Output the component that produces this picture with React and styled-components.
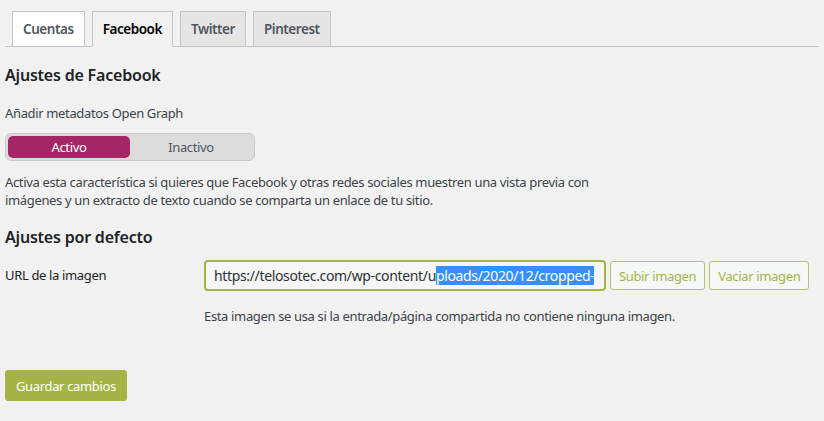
import React from "react";
import styled, { createGlobalStyle } from "styled-components";

const Global = createGlobalStyle`
  html, body { margin: 0; padding: 0; background: #f1f1f1; }
  body { font-family: "Noto Sans", "Open Sans", sans-serif; font-size: 13px; letter-spacing: -0.35px; color: #3c434a; }
  * { box-sizing: border-box; }
`;

const Page = styled.div`
  padding: 0 5px;
  width: 824px;
  height: 421px;
  overflow: hidden;
`;

const TabNav = styled.nav`
  display: flex;
  gap: 7px;
  margin-top: 11px;
  padding-left: 7px;
  border-bottom: 1px solid #c3c4c7;
`;

const Tab = styled.a`
  display: block;
  height: 36px;
  margin-bottom: -1px;
  padding: 0 10px;
  font-size: 13.5px;
  font-weight: 600;
  letter-spacing: -0.45px;
  line-height: 34px;
  border: 1px solid #c3c4c7;
  background: ${(p) => (p.$variant === "white" ? "#fff" : p.$variant === "active" ? "#f1f1f1" : "#e5e5e5")};
  border-bottom-color: ${(p) => (p.$variant === "active" ? "#f1f1f1" : "#c3c4c7")};
  color: ${(p) => (p.$variant === "active" ? "#000" : "#50575e")};
  text-decoration: none;
`;

const Heading = styled.h2`
  margin: ${(p) => p.$top}px 0 0;
  font-size: 16px;
  font-weight: 600;
  letter-spacing: -0.2px;
  line-height: 24px;
  color: #1d2327;
`;

const Label = styled.p`
  margin: ${(p) => p.$top || 0}px 0 0;
  line-height: 18px;
`;

const Toggle = styled.div`
  display: flex;
  width: 250px;
  height: 28px;
  margin-top: 11px;
  padding: 2px;
  background: #dcdcdc;
  border: 1px solid #c8c8c8;
  border-radius: 6px;
`;

const ToggleOption = styled.div`
  flex: 1;
  display: flex;
  align-items: center;
  justify-content: center;
  border-radius: 5px;
  background: ${(p) => (p.$on ? "#a62566" : "transparent")};
  color: ${(p) => (p.$on ? "#fff" : "#50575e")};
`;

const Row = styled.div`
  display: grid;
  grid-template-columns: 199px auto;
  margin-top: 11px;
`;

const RowLabel = styled.div`
  padding-top: 6px;
  line-height: 18px;
  color: #1d2327;
`;

const Field = styled.div`
  display: flex;
  flex-direction: column;
`;

const Controls = styled.div`
  display: flex;
  align-items: center;
  gap: 4px;
`;

const UrlBox = styled.div`
  width: 402px;
  height: 31px;
  border: 2px solid #a4b545;
  border-radius: 4px;
  background: #f6f6f6;
  padding: 0 8px;
  font-size: 14px;
  line-height: 27px;
  color: #2c3338;
  white-space: nowrap;
  overflow: hidden;
`;

const Sel = styled.span`
  background: #3390ff;
  color: #fff;
`;

const GhostButton = styled.button`
  height: 29px;
  padding: 0 8px;
  border: 1px solid #b7c16a;
  border-radius: 3px;
  background: #f6f7f7;
  color: #a4b545;
  font-family: inherit;
  font-size: 13px;
  letter-spacing: -0.35px;
  white-space: nowrap;
`;

const Help = styled.p`
  margin: 16px 0 0;
  line-height: 18px;
  color: #3c434a;
`;

const Primary = styled.button`
  margin-top: 45px;
  height: 31px;
  padding: 0 10px;
  border: 1px solid #a4b545;
  border-radius: 3px;
  background: #a4b545;
  color: #fff;
  font-family: inherit;
  font-size: 13px;
  letter-spacing: -0.35px;
`;

export default function App() {
  return (
    <>
      <Global />
      <Page>
        <TabNav>
          <Tab $variant="white">Cuentas</Tab>
          <Tab $variant="active">Facebook</Tab>
          <Tab>Twitter</Tab>
          <Tab>Pinterest</Tab>
        </TabNav>
        <Heading $top={16}>Ajustes de Facebook</Heading>
        <Label $top={17}>Añadir metadatos Open Graph</Label>
        <Toggle>
          <ToggleOption $on>Activo</ToggleOption>
          <ToggleOption>Inactivo</ToggleOption>
        </Toggle>
        <Label $top={12}>
          Activa esta característica si quieres que Facebook y otras redes sociales muestren una vista previa con
          <br />
          imágenes y un extracto de texto cuando se comparta un enlace de tu sitio.
        </Label>
        <Heading $top={16}>Ajustes por defecto</Heading>
        <Row>
          <RowLabel>URL de la imagen</RowLabel>
          <Field>
            <Controls>
              <UrlBox>
                https://telosotec.com/wp-content/u<Sel>ploads/2020/12/cropped-</Sel>
              </UrlBox>
              <GhostButton>Subir imagen</GhostButton>
              <GhostButton>Vaciar imagen</GhostButton>
            </Controls>
            <Help>Esta imagen se usa si la entrada/página compartida no contiene ninguna imagen.</Help>
          </Field>
        </Row>
        <Primary>Guardar cambios</Primary>
      </Page>
    </>
  );
}
